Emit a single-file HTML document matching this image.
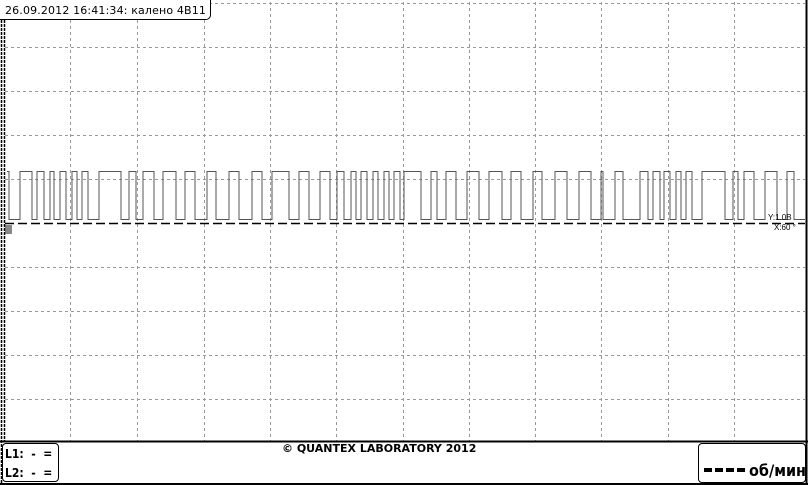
<!DOCTYPE html>
<html><head><meta charset="utf-8"><style>
html,body{margin:0;padding:0;background:#fff;}
body{width:808px;height:485px;position:relative;overflow:hidden;font-family:"Liberation Sans","DejaVu Sans",sans-serif;}
svg{position:absolute;left:0;top:0}
.ts{position:absolute;left:0;top:0;width:211px;height:20px;border:1px solid #000;border-top:none;border-left:none;border-radius:0 0 5px 0;background:#fff;font:11px "DejaVu Sans",sans-serif;letter-spacing:0.15px;line-height:21px;padding-left:5px;box-sizing:border-box;color:#000;white-space:nowrap}
.lb{position:absolute;left:2px;top:443px;width:57px;height:39px;border:1px solid #000;border-radius:4px;box-sizing:border-box;font:bold 12px "DejaVu Sans Condensed","DejaVu Sans",sans-serif;padding-left:2px}
.lb div{height:19px;line-height:20px}
.cp{position:absolute;left:282px;top:442px;font:bold 11px "DejaVu Sans",sans-serif;white-space:nowrap}
.rb{position:absolute;left:698px;top:443px;width:108px;height:40px;border:1px solid #000;border-radius:4px;box-sizing:border-box;font:bold 16px "DejaVu Sans Condensed","DejaVu Sans",sans-serif;white-space:nowrap}
.rb span{position:absolute;left:50px;top:17px}
.rb i{position:absolute;left:5px;top:24px;width:41px;height:4px;background:repeating-linear-gradient(90deg,#000 0 8px,transparent 8px 11px)}
.ax{position:absolute;font-size:8px;color:#000;font-family:"Liberation Sans",sans-serif}
</style></head><body>
<svg width="808" height="485" viewBox="0 0 808 485">
<g stroke="#999" stroke-width="1" stroke-dasharray="3 3" fill="none">
<path d="M70.5 2V441M137.5 2V441M204.5 2V441M270.5 2V441M336.5 2V441M403.5 2V441M469.5 2V441M535.5 2V441M601.5 2V441M668.5 2V441M734.5 2V441"/>
<path d="M5 47.5H805M5 91.5H805M5 135.5H805M5 179.5H805M5 267.5H805M5 311.5H805M5 355.5H805M5 399.5H805"/>
<path d="M5 3.5H805"/>
</g>
<path d="M5 223.5H805" stroke="#000" stroke-width="1.5" stroke-dasharray="9 4"/>
<path id="sig" fill="none" stroke="#555" stroke-width="1" d=""/>
<rect x="5" y="225" width="7" height="9" fill="#888"/>
<path d="M1.5 0V485M4.5 0V441" stroke="#000" stroke-width="1.5" stroke-dasharray="3 1"/>
<path d="M0 441.5H808M0 484H808M806.5 0V485" stroke="#000" stroke-width="2"/>
</svg>
<div class="ts">26.09.2012 16:41:34: калено 4В11</div>
<div class="ax" style="left:768px;top:213px">Y:1.0В</div>
<div class="ax" style="left:774px;top:223px">X:60 °</div>
<div class="lb"><div>L1: &nbsp;- &nbsp;=</div><div>L2: &nbsp;- &nbsp;=</div></div>
<div class="cp">© QUANTEX LABORATORY 2012</div>
<div class="rb"><i></i><span>об/мин</span></div>
<script>
var p=[[7,9],[20,32],[37,44],[50,54],[60,66],[72,77],[82,88],[99,121],[129,136],[143,154],[163,176],[185,195],[207,216],[229,239],[252,262],[272,289],[299,309],[320,330],[337,344],[351,356],[361,367],[373,378],[384,389],[394,400],[404,421],[431,437],[446,456],[467,479],[489,502],[511,521],[533,542],[555,567],[579,591],[601,603],[615,623],[640,648],[653,660],[664,670],[676,681],[686,692],[702,725],[733,738],[744,754],[765,777],[787,794]];
var H=171.5,L=219.5,d="M7 "+H;
p.forEach(function(q,i){if(i>0)d+=" L"+q[0]+" "+L+" L"+q[0]+" "+H;d+=" L"+q[1]+" "+H+" L"+q[1]+" "+L;});
d+=" L805 "+L;
document.getElementById("sig").setAttribute("d",d);
</script>
</body></html>
